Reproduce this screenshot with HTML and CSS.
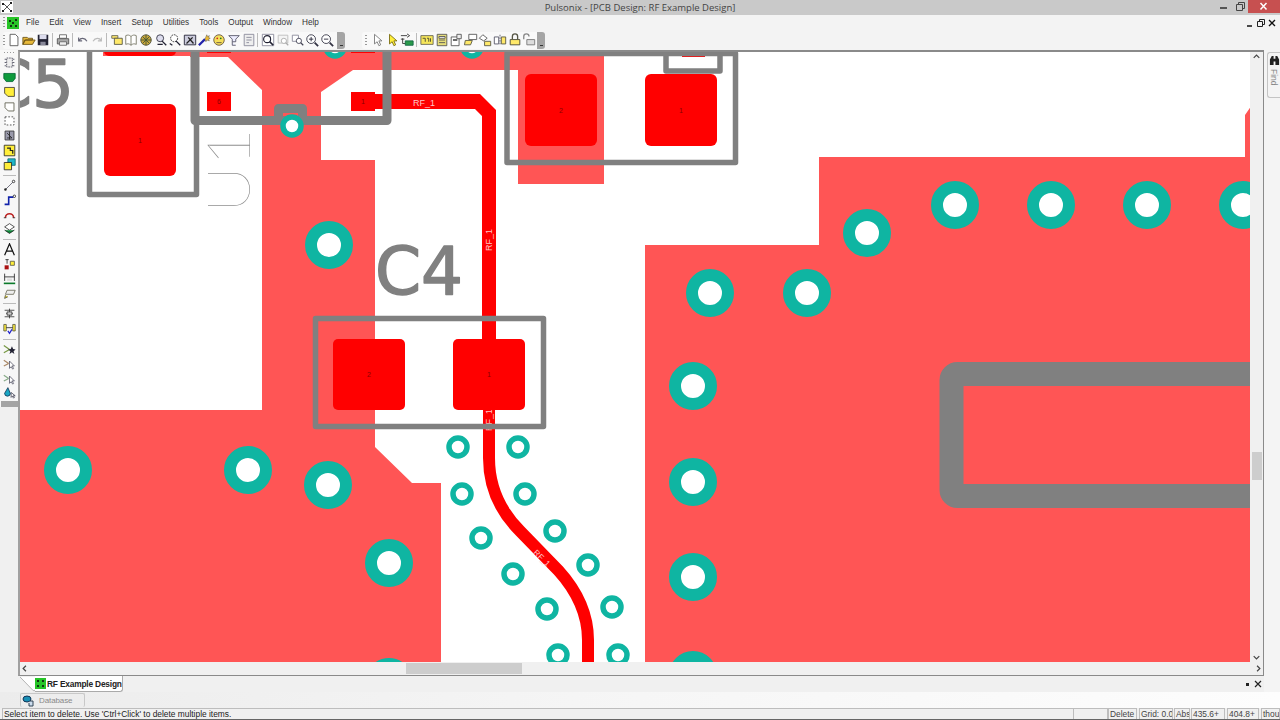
FILE: index.html
```html
<!DOCTYPE html>
<html lang="en">
<head>
    <meta charset="UTF-8">
    <meta name="viewport" content="width=device-width, initial-scale=1.0">
    <title>Pulsonix - [PCB Design: RF Example Design]</title>
    <link rel="stylesheet" href="styles.css">
</head>
<body>

    <!-- Title bar -->
    <div class="titlebar">
        <svg class="appicon" viewBox="0 0 12 12"><path d="M1 2h2v2H1zM9 1h2v2H9zM1 9h2v2H1zM9 9h2v2H9zM5 5h2v2H5z" fill="#222"/><path d="M3 3l6 6M3 9l6-6" stroke="#555" fill="none"/></svg>
        <span class="title">Pulsonix - [PCB Design: RF Example Design]</span>
        <div class="winbtns">
            <svg class="winbtn" viewBox="0 0 16 13"><path d="M4 8h7" stroke="#555" stroke-width="2"/></svg>
            <svg class="winbtn" viewBox="0 0 16 13"><path d="M4.500 4.500h6v6h-6zM6.500 4.500v-2h6v6h-2" stroke="#444" fill="none"/></svg>
            <div class="closebtn"><svg viewBox="0 0 32 13"><path d="M12.500 3l6 6.500M18.500 3l-6 6.500" stroke="#fff" stroke-width="1.500"/></svg></div>
        </div>
    </div>

    <!-- Menu bar -->
    <div class="menubar">
        <span class="grip-v"></span>
        <svg class="menuicon" viewBox="0 0 12 12"><rect width="12" height="12" fill="#27c427"/><path d="M2 3h2v2H2zM8 2h2v2H8zM3 8h2v2H3zM8 8h2v2H8zM5 5h2v2H5z" fill="#113311"/></svg>
        <span class="menuitem">File</span>
        <span class="menuitem">Edit</span>
        <span class="menuitem">View</span>
        <span class="menuitem">Insert</span>
        <span class="menuitem">Setup</span>
        <span class="menuitem">Utilities</span>
        <span class="menuitem">Tools</span>
        <span class="menuitem">Output</span>
        <span class="menuitem">Window</span>
        <span class="menuitem">Help</span>
        <div class="docbtns">
            <svg viewBox="0 0 11 10"><path d="M2 8h5" stroke="#111" stroke-width="1.500"/></svg>
            <svg viewBox="0 0 11 10"><path d="M1.500 3.500h5v5h-5zM3.500 3.500v-2h5v5h-2" stroke="#222" fill="none"/></svg>
            <svg viewBox="0 0 11 10"><path d="M2 2l6 6M8 2l-6 6" stroke="#111" stroke-width="1.300"/></svg>
        </div>
    </div>

    <!-- Top toolbars -->
    <div class="toolrow">
        <div class="toolbar tb-main">
            <span class="grip-v"></span>
            <svg viewBox="0 0 16 16"><path d="M3.500 1.500h6l3 3v10h-9z" fill="#fff" stroke="#555"/></svg>
            <svg viewBox="0 0 16 16"><path d="M1 13V5h5l1 1h5v2H4l-3 5 2-5h12l-3 5z" fill="#e8b93a" stroke="#6b5317"/></svg>
            <svg viewBox="0 0 16 16"><path d="M2 2h12v12H2z" fill="#223"/><path d="M4 2h8v5H4z" fill="#dde"/><path d="M5 10h6v4H5z" fill="#889"/></svg>
            <span class="sep"></span>
            <svg viewBox="0 0 16 16"><path d="M4 2h8v4H4z" fill="#fff" stroke="#666"/><path d="M1.500 6.500h13v6h-13z" fill="#aaa" stroke="#555"/><path d="M4 10h8v4H4z" fill="#eee" stroke="#666"/></svg>
            <span class="sep"></span>
            <svg viewBox="0 0 16 16"><path d="M3 5v4h4M3.500 8.500C5 5.500 10 5 12.500 9.500" fill="none" stroke="#667" stroke-width="1.300"/></svg>
            <svg viewBox="0 0 16 16"><path d="M13 5v4H9M12.500 8.500C11 5.500 6 5 3.500 9.500" fill="none" stroke="#bbb" stroke-width="1.300"/></svg>
            <span class="sep"></span>
            <svg viewBox="0 0 16 16"><path d="M2 3h7v3H2z" fill="#ffe96a" stroke="#665"/><path d="M5 6h9v7H5z" fill="#ffe96a" stroke="#554"/></svg>
            <svg viewBox="0 0 16 16"><path d="M2 3c2-1 4-1 6 1 2-2 4-2 6-1v10c-2-1-4-1-6 1-2-2-4-2-6-1zM8 4v10" fill="#fff" stroke="#776"/></svg>
            <svg viewBox="0 0 16 16"><circle cx="8" cy="8" r="6" fill="#c9a63a" stroke="#554"/><path d="M2 8h12M8 2v12M4 4l8 8M12 4l-8 8" stroke="#453"/></svg>
            <svg viewBox="0 0 16 16"><circle cx="7" cy="6" r="4" fill="#dde" stroke="#334"/><path d="M9 9l5 5M4 13h6" stroke="#223" stroke-width="1.500"/></svg>
            <svg viewBox="0 0 16 16"><circle cx="7" cy="6" r="4" fill="#fff" stroke="#222" stroke-dasharray="2 1"/><path d="M9 9l5 5M2 12l3 2" stroke="#223" stroke-width="1.500"/></svg>
            <svg viewBox="0 0 16 16"><path d="M1.500 2.500h13v11h-13z" fill="#ccd" stroke="#223"/><path d="M4 12l7-7M6 5l6 7" stroke="#222" stroke-width="1.500"/></svg>
            <svg viewBox="0 0 16 16"><path d="M1 14l7-7" stroke="#22a" stroke-width="2.500"/><path d="M10 2l1 2 2-1-1 2 2 1-2 1 1 2-3-1-1 2-1-3z" fill="#eb3" stroke="#444" stroke-width=".5"/></svg>
            <svg viewBox="0 0 16 16"><circle cx="8" cy="8" r="6" fill="#f5de5a" stroke="#654"/><circle cx="6" cy="6" r="1" fill="#c22"/><circle cx="10" cy="6" r="1" fill="#272"/><path d="M5 11h6" stroke="#654"/></svg>
            <svg viewBox="0 0 16 16"><path d="M2 3h12l-4 4v3H6V7z M6 10v4h4" fill="#eef" stroke="#556"/></svg>
            <svg viewBox="0 0 16 16"><path d="M2.500 1.500h11v13h-11z" fill="#eee" stroke="#889"/><path d="M5 5h6M5 8h6M5 11h3" stroke="#889"/></svg>
            <span class="sep"></span>
            <svg viewBox="0 0 16 16"><path d="M1.500 1.500h13v13h-13z" fill="#fff" stroke="#889"/><circle cx="7" cy="7" r="4" fill="#fff" stroke="#223" stroke-width="1.300"/><path d="M10 10l4 4" stroke="#223" stroke-width="2"/></svg>
            <svg viewBox="0 0 16 16"><path d="M2.500 2.500h11v9h-11z" fill="#f4f4f4" stroke="#bbb"/><circle cx="9" cy="9" r="3" fill="#fff" stroke="#aaa"/><path d="M11 11l3 3" stroke="#aaa" stroke-width="1.500"/></svg>
            <svg viewBox="0 0 16 16"><path d="M1.500 2.500h7v7h-7z" fill="#fff" stroke="#889"/><circle cx="9" cy="9" r="3" fill="#fff" stroke="#445"/><path d="M11 11l3 3" stroke="#445" stroke-width="1.500"/></svg>
            <svg viewBox="0 0 16 16"><circle cx="7" cy="7" r="5" fill="#fff" stroke="#334"/><path d="M4.500 7h5M7 4.500v5" stroke="#223"/><path d="M11 11l4 4" stroke="#334" stroke-width="2"/></svg>
            <svg viewBox="0 0 16 16"><circle cx="7" cy="7" r="5" fill="#fff" stroke="#334"/><path d="M4.500 7h5" stroke="#223"/><path d="M11 11l4 4" stroke="#334" stroke-width="2"/></svg>
            <span class="tb-end"></span>
        </div>
        <div class="toolbar tb-select">
            <span class="grip-v"></span>
            <svg viewBox="0 0 16 16"><path d="M4 1.500v11l3-2.500 2 4.500 2-1-2-4.500h3.500z" fill="#fff" stroke="#777"/></svg>
            <svg viewBox="0 0 16 16"><path d="M4 1.500v11l3-2.500 2 4.500 2-1-2-4.500h3.500z" fill="#ffee3a" stroke="#776a10"/></svg>
            <svg viewBox="0 0 16 16"><path d="M1 3h7M1 7h4M8 1l3 2-3 2" stroke="#333" fill="none"/><path d="M6 9h9v5H6z" fill="#2a9a4a" stroke="#164"/><path d="M3 6v6h3" stroke="#333" fill="none"/></svg>
            <span class="sep"></span>
            <svg viewBox="0 0 16 16"><path d="M1 3h14v10H1z" fill="#f6e65a" stroke="#665"/><path d="M3 6h3v4M8 6h2v4M12 6v4" stroke="#443" fill="none"/></svg>
            <svg viewBox="0 0 16 16"><path d="M2.500 1.500h11v13h-11z" fill="#e6dd7a" stroke="#555"/><path d="M4.500 4h7v2h-7zM4.500 8h7M4.500 11h7" stroke="#555" fill="#fff"/></svg>
            <svg viewBox="0 0 16 16"><path d="M2.500 4.500h9v10h-9z" fill="#fff" stroke="#555"/><path d="M9 1.500h5v5H9z" fill="#eee" stroke="#555"/><path d="M4.500 7h5v2h-5z" fill="#555"/></svg>
            <svg viewBox="0 0 16 16"><path d="M5.500 1.500h9v6h-9z" fill="#fff" stroke="#555"/><path d="M1.500 8.500h8l-2 5h-7z" fill="#ffe96a" stroke="#554"/></svg>
            <svg viewBox="0 0 16 16"><path d="M1.500 6l4-4 5 4-4 3z" fill="#fff" stroke="#555"/><path d="M7.500 9.500h7v5h-7z" fill="#ffe96a" stroke="#554"/></svg>
            <svg viewBox="0 0 16 16"><path d="M1.500 4.500h5v8h-5z" fill="#fff" stroke="#556"/><path d="M9.500 4.500h5v8h-5z" fill="#ffe96a" stroke="#554"/><path d="M8 2v12" stroke="#556" stroke-dasharray="2 1"/></svg>
            <svg viewBox="0 0 16 16"><path d="M5 7V4a3 3 0 016 0v3" fill="none" stroke="#554" stroke-width="1.500"/><path d="M2.500 7.500h11v6h-11z" fill="#ffe96a" stroke="#443"/></svg>
            <svg viewBox="0 0 16 16"><path d="M2 7V4a3 3 0 016 0" fill="none" stroke="#888" stroke-width="1.500"/><path d="M5.500 7.500h9v6h-9z" fill="#ddd" stroke="#777"/></svg>
            <span class="tb-end"></span>
        </div>
    </div>

    <div class="workspace">

        <!-- Left vertical toolbar -->
        <div class="lefttools">
            <span class="grip-h"></span>
            <svg viewBox="0 0 16 16"><path d="M4.500 2.500h7v11h-7z" fill="#eee" stroke="#445" stroke-dasharray="2 1"/><path d="M2 4h2M2 8h2M2 12h2M12 4h2M12 8h2M12 12h2" stroke="#445"/></svg>
            <svg viewBox="0 0 16 16"><path d="M1 3h14v6l-3 4H4L1 9z" fill="#0e9a3c" stroke="#063"/></svg>
            <svg viewBox="0 0 16 16"><path d="M2 3h12v11H6l-4-4z" fill="#ffee3a" stroke="#333"/></svg>
            <svg viewBox="0 0 16 16"><path d="M2.500 3.500h11v10h-7l-4-4z" fill="#fff" stroke="#554"/></svg>
            <svg viewBox="0 0 16 16"><path d="M2.500 3.500h11v10h-11z" fill="#fff" stroke="#333" stroke-dasharray="2 2"/></svg>
            <svg viewBox="0 0 16 16"><path d="M2.500 2.500h11v11h-11z" fill="#99a" stroke="#333"/><path d="M5 5l6 6M5 11h6M8 3v10" stroke="#222"/></svg>
            <svg viewBox="0 0 16 16"><path d="M1.500 1.500h13v13h-13z" fill="#ffee3a" stroke="#222"/><path d="M5 5h4v3h3v4" fill="none" stroke="#222" stroke-width="1.500"/></svg>
            <svg viewBox="0 0 16 16"><path d="M6 1h9v8H6z" fill="#1fb6c8" stroke="#166"/><path d="M1.500 5.500h9v9h-9z" fill="#ffee3a" stroke="#222"/></svg>
            <span class="sep-h"></span>
            <svg viewBox="0 0 16 16"><path d="M3 13l10-10" stroke="#556"/><circle cx="3" cy="13" r="1.500" fill="#222"/><circle cx="13" cy="3" r="1.500" fill="#fff" stroke="#222"/></svg>
            <svg viewBox="0 0 16 16"><path d="M2 14h5V5h6" fill="none" stroke="#12a" stroke-width="2"/><circle cx="14" cy="4" r="1.500" fill="#fff" stroke="#222"/></svg>
            <svg viewBox="0 0 16 16"><path d="M3 12a5 5 0 0110 0" fill="none" stroke="#b22" stroke-width="2"/><path d="M1 12h3M12 12h3" stroke="#222"/></svg>
            <svg viewBox="0 0 16 16"><path d="M2 6l6-4 6 4-6 4z" fill="#fff" stroke="#333"/><path d="M2 10l6 4 6-4" fill="#0c8a3a" stroke="#222"/></svg>
            <span class="sep-h"></span>
            <svg viewBox="0 0 16 16"><path d="M2 15L8 1l6 14M4.500 10h7" fill="none" stroke="#111" stroke-width="1.500"/></svg>
            <svg viewBox="0 0 16 16"><path d="M2 9h5v5H2z" fill="#a11"/><path d="M9 4h5v5H9z" fill="#ffee3a" stroke="#554"/><path d="M3 2h4M5 2v5" stroke="#222"/></svg>
            <svg viewBox="0 0 16 16"><path d="M1 14h14" stroke="#0a7a2a" stroke-width="2"/><path d="M2 2v9M14 2v9M2 6h12" stroke="#222"/><path d="M5 8h6v3H5z" fill="#ddd"/></svg>
            <svg viewBox="0 0 16 16"><path d="M5 4h10l-2 5H3z" fill="#eee" stroke="#665"/><path d="M3 10l-1 4 4-2" fill="#dc3" stroke="#554"/></svg>
            <span class="sep-h"></span>
            <svg viewBox="0 0 16 16"><path d="M2 4h12M4 8h8M2 12h12M8 2v12" stroke="#333"/><path d="M5 6h6v4H5z" fill="#ccc" stroke="#333"/></svg>
            <svg viewBox="0 0 16 16"><path d="M1 3h3v8H1zM12 3h3v8h-3z" fill="#ffee3a" stroke="#554"/><path d="M4 7h8" stroke="#222"/><path d="M6 11l2 3 3-5" fill="none" stroke="#22c" stroke-width="1.500"/></svg>
            <span class="sep-h"></span>
            <svg viewBox="0 0 16 16"><path d="M1 3l7 5M1 12l7-4" stroke="#794" stroke-width="1.500"/><path d="M11 4l1.500 3.500 3 .5-2.500 2 1 3.500-3-2-3 2 1-3.500L6.500 8l3-.5z" fill="#223"/></svg>
            <svg viewBox="0 0 16 16"><path d="M1 4l6 4M1 11l6-3" stroke="#a86" stroke-width="1.500"/><path d="M8 5v9l2-2 2 3 1-1-2-3h3z" fill="#fff" stroke="#556"/></svg>
            <svg viewBox="0 0 16 16"><path d="M1 4l6 4M1 11l6-3" stroke="#8a8" stroke-width="1.500"/><path d="M8 5v9l2-2 2 3 1-1-2-3h3z" fill="#fff" stroke="#556"/></svg>
            <svg viewBox="0 0 16 16"><path d="M6 2L2 9a3.500 3.500 0 007 0z" fill="#1aa7c4" stroke="#135"/><path d="M10 8v6l1.500-1.500L13 15l1-1-1.500-2H15z" fill="#fff" stroke="#445"/></svg>
            <span class="left-end"></span>
        </div>

        <!-- Document window -->
        <div class="docarea">
            <div class="docwindow">
                <div class="docrow">
                    <svg class="board" viewBox="20 52 1230 610" width="1230" height="610">
                        <rect class="copper" x="103" y="40" width="120" height="16"/>
                        <polygon class="copper" points="190,40 518,40 518,70 353,70 321,92 321,160 375,160 375,447 412,483 441,483 441,670 10,670 10,410 262,410 262,90 228,57 190,57"/>
                        <polygon class="copper" points="518,40 604,40 604,184 518,184"/>
                        <polygon class="copper" points="645,245 819,245 819,157 1245,157 1245,115 1252,105 1252,670 645,670"/>

                        <path class="trace" d="M489 400 L489 458 C489 490 502 513 520 531 L558 570 C578 592 588 615 588 640 L588 670"/>
                        <polygon class="trace-fill" points="375,94 480,94 496,110 496,350 482,350 482,116 475,109 375,109"/>
                        <text class="netname" transform="translate(492 420) rotate(-90)">RF_1</text>

                        <!-- Vias -->
                        <g class="via-big">
                            <circle cx="329" cy="245" r="18"/><circle cx="68" cy="470" r="18"/><circle cx="248" cy="470" r="18"/>
                            <circle cx="328" cy="485" r="18"/><circle cx="389" cy="563" r="18"/><circle cx="389" cy="682" r="18"/>
                            <circle cx="710" cy="293" r="18"/><circle cx="807" cy="293" r="18"/><circle cx="867" cy="233" r="18"/>
                            <circle cx="955" cy="205" r="18"/><circle cx="1051" cy="205" r="18"/><circle cx="1147" cy="205" r="18"/>
                            <circle cx="1243" cy="205" r="18"/><circle cx="693" cy="386" r="18"/><circle cx="693" cy="482" r="18"/>
                            <circle cx="693" cy="577" r="18"/><circle cx="693" cy="675" r="18"/>
                        </g>
                        <g class="via-small">
                            <circle cx="335" cy="47" r="9"/><circle cx="472" cy="47" r="9"/>
                            <circle cx="458" cy="447" r="9"/><circle cx="518" cy="447" r="9"/><circle cx="462" cy="494" r="9"/>
                            <circle cx="525" cy="494" r="9"/><circle cx="555" cy="531" r="9"/><circle cx="481" cy="538" r="9"/>
                            <circle cx="588" cy="565" r="9"/><circle cx="513" cy="574" r="9"/><circle cx="612" cy="607" r="9"/>
                            <circle cx="547" cy="609" r="9"/><circle cx="558" cy="655" r="9"/><circle cx="618" cy="655" r="9"/>
                        </g>

                        <!-- Pads -->
                        <rect class="pad" x="104" y="40" width="72" height="16" rx="5"/>
                        <rect class="pad" x="104" y="104" width="72" height="72" rx="6"/>
                        <rect class="pad" x="525" y="74" width="72" height="72" rx="6"/>
                        <rect class="pad" x="645" y="74" width="72" height="72" rx="6"/>
                        <rect class="pad" x="333" y="339" width="72" height="71" rx="5"/>
                        <rect class="pad" x="453" y="339" width="72" height="71" rx="5"/>
                        <rect class="pad" x="207" y="92" width="24" height="19"/>
                        <rect class="pad" x="351" y="92" width="24" height="19"/>
                        <rect class="pad" x="207" y="42" width="24" height="11"/>
                        <rect class="pad" x="351" y="42" width="24" height="11"/>
                        <rect class="pad" x="682" y="50" width="23" height="7"/>

                        <!-- Component outlines -->
                        <path class="outline thin" d="M89.500 40 V194.500 H196.500 V120"/>
                        <path class="outline" d="M195 40 V120.500 H387 V40"/>
                        <path class="outline" d="M278.500 120 V108.500 H302.500 V120"/>
                        <rect class="outline thin" x="507" y="53.500" width="228.500" height="109"/>
                        <path class="outline thin" d="M666 52 V71 H720 V52"/>
                        <rect class="outline thin" x="315.500" y="318.500" width="228" height="108"/>
                        <rect class="outline wide" x="951.500" y="374" width="340" height="122" rx="6"/>

                        <circle class="via-small" cx="292" cy="126" r="9"/>

                        <text class="silk" x="-14" y="107">C5</text>
                        <text class="silk" x="375" y="294">C4</text>
                        <text class="silk-thin" transform="translate(250 213) rotate(-90) scale(1.09 1)">U1</text>

                        <text class="padnum" x="140" y="143">1</text>
                        <text class="padnum" x="219" y="104">6</text>
                        <text class="padnum" x="363" y="104">1</text>
                        <text class="padnum" x="561" y="113">2</text>
                        <text class="padnum" x="681" y="113">1</text>
                        <text class="padnum" x="369" y="377">2</text>
                        <text class="padnum" x="489" y="377">1</text>

                        <text class="netname" x="424" y="105.500">RF_1</text>
                        <text class="netname" transform="translate(492 240) rotate(-90)">RF_1</text>
                        <text class="netname small" transform="translate(540 560) rotate(45)">RF_1</text>
                    </svg>
                    <div class="vscroll">
                        <svg viewBox="0 0 14 10"><path d="M4 6l3-3 3 3" fill="none" stroke="#444" stroke-width="1.300"/></svg>
                        <div class="vtrack"><div class="vthumb"></div></div>
                        <svg viewBox="0 0 14 10"><path d="M4 4l3 3 3-3" fill="none" stroke="#444" stroke-width="1.300"/></svg>
                    </div>
                </div>
                <div class="hscroll">
                    <svg viewBox="0 0 10 14"><path d="M6 4L3 7l3 3" fill="none" stroke="#444" stroke-width="1.300"/></svg>
                    <div class="htrack"><div class="hthumb"></div></div>
                    <svg viewBox="0 0 10 14"><path d="M4 4l3 3-3 3" fill="none" stroke="#444" stroke-width="1.300"/></svg>
                </div>
            </div>
            <div class="tabstrip">
                <svg class="tabslope" viewBox="0 0 17 16"><path d="M0 0L15 15.500H17V0z" fill="#fff"/><path d="M0 0L15 15.500H17" fill="none" stroke="#aaa"/></svg>
                <div class="doctab">
                    <svg viewBox="0 0 11 11"><rect width="11" height="11" fill="#27c427"/><path d="M2 2h2v2H2zM7 2h2v2H7zM2 7h2v2H2zM7 7h2v2H7z" fill="#113311"/></svg>
                    <span>RF Example Design</span>
                </div>
                <div class="tabbtns">
                    <svg viewBox="0 0 8 8"><path d="M2 3h3v3H2z" fill="#222"/></svg>
                    <svg viewBox="0 0 8 8"><path d="M1 1l6 6M7 1L1 7" stroke="#222" stroke-width="1.200"/></svg>
                </div>
            </div>
        </div>

        <!-- Find side tab -->
        <div class="sidepanel">
            <div class="findtab">
                <svg viewBox="0 0 12 12"><path d="M1 11V5l2-4h2v3h2V1h2l2 4v6H7V7H5v4z" fill="#222"/></svg>
                <span>Find</span>
            </div>
        </div>
    </div>

    <!-- Database bar -->
    <div class="dbbar">
        <div class="dbbutton">
            <svg viewBox="0 0 12 12"><ellipse cx="5" cy="4" rx="4" ry="3" fill="#1a8fb5" stroke="#135"/><path d="M8 6h3v5H7V8" fill="#cde" stroke="#345"/></svg>
            <span>Database</span>
        </div>
    </div>

    <!-- Status bar -->
    <div class="statusbar">
        <div class="stat stat-msg">Select item to delete. Use 'Ctrl+Click' to delete multiple items.</div>
        <div class="stat stat-blank"></div>
        <div class="stat stat-mode">Delete</div>
        <div class="stat stat-grid">Grid: 0.0</div>
        <div class="stat stat-abs">Abs</div>
        <div class="stat stat-x">435.6+</div>
        <div class="stat stat-y">404.8+</div>
        <div class="stat stat-unit">thou</div>
    </div>

</body>
</html>
```

FILE: styles.css
```css
* {
    box-sizing: border-box;
}
html, body {
    margin: 0;
    padding: 0;
}
body {
    width: 1280px;
    height: 720px;
    overflow: hidden;
    background-color: #f0f0f0;
    font-family: "Liberation Sans", Arial, sans-serif;
    color: #333;
    display: flex;
    flex-direction: column;
}

/* Title bar */
.titlebar {
    height: 15px;
    background-color: #c9c9c9;
    display: flex;
    align-items: flex-start;
    position: relative;
}
.appicon {
    width: 12px;
    height: 12px;
    margin: 1px 0 0 1px;
    background-color: #fff;
}
.title {
    position: absolute;
    left: 0;
    right: 0;
    top: 1px;
    text-align: center;
    font-family: "Open Sans", sans-serif;
    font-size: 9.5px;
    line-height: 13px;
    color: #444;
}
.winbtns {
    margin-left: auto;
    display: flex;
}
.winbtn {
    width: 16px;
    height: 13px;
}
.closebtn {
    width: 32px;
    height: 13px;
    background-color: #c75050;
    display: flex;
}
.closebtn svg {
    width: 32px;
    height: 13px;
}

/* Menu bar */
.menubar {
    height: 15px;
    background-color: #f3f3f3;
    display: flex;
    align-items: center;
    font-size: 8.2px;
    color: #333;
    padding-left: 3px;
}
.grip-v {
    width: 2px;
    height: 11px;
    flex: none;
    background-image: linear-gradient(#999 50%, transparent 50%);
    background-size: 2px 3px;
}
.menuicon {
    width: 12px;
    height: 12px;
    margin: 0 7px 0 2px;
}
.menuitem {
    margin-right: 10px;
}
.docbtns {
    margin-left: auto;
    display: flex;
    padding-right: 2px;
}
.docbtns svg {
    width: 11px;
    height: 10px;
}

/* Top toolbars */
.toolrow {
    height: 20px;
    background-color: #f3f3f3;
    display: flex;
    align-items: center;
    padding-left: 3px;
}
.toolbar {
    height: 17px;
    background-color: #f9f9f9;
    display: flex;
    align-items: center;
    border-radius: 3px;
}
.tb-main {
    width: 342px;
}
.tb-select {
    width: 182px;
    margin-left: 17px;
}
.tb-main > .grip-v {
    margin-right: 2px;
}
.tb-select > .grip-v {
    margin: 0 4px 0 3px;
}
.toolbar svg {
    width: 14px;
    height: 14px;
    margin-right: 0.65px;
    flex: none;
}
.sep {
    width: 1px;
    height: 14px;
    margin: 0 3px 0 1px;
    background-color: #bbb;
    flex: none;
}
.tb-end {
    margin-left: auto;
    width: 8px;
    height: 17px;
    background-color: #a4a4a4;
    background-image: linear-gradient(#333, #333);
    background-size: 3px 1px;
    background-position: 3px 13px;
    background-repeat: no-repeat;
    border-radius: 0 3px 3px 0;
    flex: none;
}

/* Workspace */
.workspace {
    height: 642px;
    display: flex;
}
.lefttools {
    width: 18px;
    height: 357px;
    padding: 1px 1px 0 2px;
    background-color: #f7f7f7;
    display: flex;
    flex-direction: column;
    align-items: center;
}
.lefttools svg {
    width: 13px;
    height: 13px;
    margin-bottom: 1.6px;
    flex: none;
}
.grip-h {
    width: 11px;
    height: 2px;
    margin: 1px 0 3px;
    background-image: linear-gradient(90deg, #999 50%, transparent 50%);
    background-size: 3px 2px;
}
.sep-h {
    width: 13px;
    height: 1px;
    margin: 2px 0 3px;
    background-color: #bbb;
    flex: none;
}
.left-end {
    margin-top: auto;
    width: 18px;
    height: 6px;
    background-color: #a4a4a4;
    flex: none;
}

/* Document window */
.docarea {
    width: 1246px;
    display: flex;
    flex-direction: column;
}
.docwindow {
    height: 626px;
    border-top: 2px solid #8a8a8a;
    border-left: 2px solid #a0a0a0;
    border-right: 1px solid #8a8a8a;
    border-bottom: 1px solid #8a8a8a;
    background-color: #f0f0f0;
    display: flex;
    flex-direction: column;
}
.docrow {
    height: 610px;
    display: flex;
}
.board {
    display: block;
    flex: none;
    background-color: #fff;
}
.copper {
    fill: #ff5555;
}
.trace {
    fill: none;
    stroke: #ff0000;
    stroke-width: 12;
}
.trace-fill {
    fill: #ff0000;
}
.pad {
    fill: #ff0000;
}
.via-big circle {
    fill: #fff;
    stroke: #0fb5a2;
    stroke-width: 12;
}
.via-small circle, circle.via-small {
    fill: #fff;
    stroke: #0fb5a2;
    stroke-width: 5.5;
}
.outline {
    fill: none;
    stroke: #808080;
    stroke-width: 9;
    stroke-linejoin: round;
    stroke-linecap: round;
}
.outline.thin {
    stroke-width: 5.5;
}
.outline.wide {
    stroke-width: 24;
}
.silk {
    font-family: "DejaVu Sans", sans-serif;
    font-size: 66px;
    fill: #808080;
    stroke: #808080;
    stroke-width: 1.5;
    stroke-linejoin: round;
}
.silk-thin {
    font-family: Lato, sans-serif;
    font-weight: 100;
    font-size: 60px;
    fill: #909090;
}
.padnum {
    font-family: "Liberation Sans", sans-serif;
    font-size: 7px;
    fill: #8a0000;
    text-anchor: middle;
}
.netname {
    font-family: "Liberation Sans", sans-serif;
    font-size: 9px;
    fill: #ffc8c8;
    text-anchor: middle;
}
.netname.small {
    font-size: 8px;
}
.vscroll {
    width: 13px;
    display: flex;
    flex-direction: column;
    flex: none;
}
.vscroll svg {
    height: 10px;
    flex: none;
}
.vtrack {
    flex: 1;
    padding-top: 390px;
}
.vthumb {
    width: 10px;
    height: 28px;
    margin-left: 2px;
    background-color: #cdcdcd;
}
.hscroll {
    height: 13px;
    display: flex;
}
.hscroll svg {
    width: 10px;
    flex: none;
}
.htrack {
    flex: 1;
    padding-left: 376px;
}
.hthumb {
    width: 116px;
    height: 11px;
    margin-top: 1px;
    background-color: #cdcdcd;
}
.tabstrip {
    height: 16px;
    display: flex;
    align-items: stretch;
    padding-left: 2px;
    background-color: #f0f0f0;
}
.tabslope {
    width: 15px;
    height: 16px;
    flex: none;
}
.doctab {
    width: 88px;
    display: flex;
    align-items: center;
    gap: 1px;
    background-color: #fff;
    border-right: 1px solid #aaa;
    border-bottom: 1px solid #aaa;
    border-radius: 0 0 3px 0;
    font-size: 8.4px;
    font-weight: bold;
    color: #222;
    white-space: nowrap;
    letter-spacing: -0.2px;
}
.doctab svg {
    width: 11px;
    height: 11px;
    flex: none;
}
.tabbtns {
    margin-left: auto;
    display: flex;
    align-items: center;
    gap: 2px;
    padding-right: 2px;
}
.tabbtns svg {
    width: 8px;
    height: 8px;
}

/* Find side tab */
.sidepanel {
    width: 16px;
    padding: 2px 0 0 3px;
    background-color: #f4f4f4;
}
.findtab {
    width: 13px;
    height: 46px;
    border: 1px solid #c4c4c4;
    border-right: none;
    border-radius: 3px 0 0 3px;
    display: flex;
    flex-direction: column;
    align-items: center;
}
.findtab svg {
    width: 11px;
    height: 11px;
    margin: 2px 0 3px;
    flex: none;
}
.findtab span {
    writing-mode: vertical-rl;
    font-size: 8.5px;
    color: #888;
}

/* Database bar */
.dbbar {
    height: 16px;
    padding: 1px 0 0 20px;
    background-image: linear-gradient(90deg, #ececec, #f6f6f6 50%, #fdfdfd);
}
.dbbutton {
    width: 65px;
    height: 14px;
    border: 1px solid #c8c8c8;
    border-bottom: none;
    border-radius: 2px;
    background-color: #ededed;
    display: flex;
    align-items: center;
    padding-left: 1px;
    font-size: 8px;
    letter-spacing: -0.1px;
    color: #8a8a8a;
}
.dbbutton svg {
    width: 12px;
    height: 12px;
    margin-right: 5px;
    flex: none;
}

/* Status bar */
.statusbar {
    height: 12px;
    background-color: #f0f0f0;
    border-bottom: 1px solid #666;
    display: flex;
    padding-left: 2px;
    font-size: 8.4px;
    line-height: 11px;
    color: #444;
}
.stat {
    height: 11px;
    border: 1px solid #bdbdbd;
    border-bottom: none;
    padding: 0 0 0 1px;
    white-space: nowrap;
    overflow: hidden;
    flex: none;
    line-height: 10px;
}
.stat-msg { width: 1072px; color: #222; }
.stat-blank { width: 34px; border-left: none; }
.stat-mode { width: 29px; margin-right: 2px; }
.stat-grid { width: 34px; margin-right: 1px; }
.stat-abs { width: 16px; margin-right: 1px; }
.stat-x { width: 34px; margin-right: 2px; }
.stat-y { width: 32px; margin-right: 2px; }
.stat-unit { width: 19px; }
```
